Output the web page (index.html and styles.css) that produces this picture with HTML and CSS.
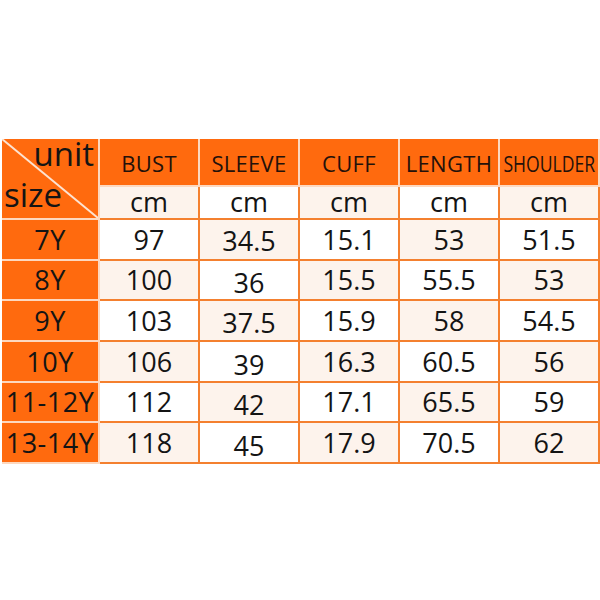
FILE: index.html
```html
<!DOCTYPE html>
<html lang="en">
<head>
<meta charset="utf-8">
<title>Size chart</title>
<link rel="stylesheet" href="styles.css">
</head>
<body>
<div class="page">
  <div class="chart">
    <div class="cell corner">
      <svg class="diag" viewBox="0 0 96 79" preserveAspectRatio="none" aria-hidden="true">
        <line x1="0" y1="0" x2="96" y2="79" stroke="#fde3d1" stroke-width="2"/>
      </svg>
      <span class="unit">unit</span>
      <span class="size">size</span>
    </div>
    <div class="cell head">BUST</div>
    <div class="cell head">SLEEVE</div>
    <div class="cell head">CUFF</div>
    <div class="cell head">LENGTH</div>
    <div class="cell head"><span class="squeeze">SHOULDER</span></div>

    <div class="cell cm p">cm</div>
    <div class="cell cm">cm</div>
    <div class="cell cm p">cm</div>
    <div class="cell cm">cm</div>
    <div class="cell cm p">cm</div>

    <div class="cell label">7Y</div>
    <div class="cell num">97</div>
    <div class="cell num p lo1">34.5</div>
    <div class="cell num">15.1</div>
    <div class="cell num p">53</div>
    <div class="cell num">51.5</div>

    <div class="cell label">8Y</div>
    <div class="cell num p">100</div>
    <div class="cell num lo2">36</div>
    <div class="cell num p">15.5</div>
    <div class="cell num">55.5</div>
    <div class="cell num p">53</div>

    <div class="cell label">9Y</div>
    <div class="cell num">103</div>
    <div class="cell num p lo1">37.5</div>
    <div class="cell num">15.9</div>
    <div class="cell num p">58</div>
    <div class="cell num">54.5</div>

    <div class="cell label">10Y</div>
    <div class="cell num p">106</div>
    <div class="cell num lo2">39</div>
    <div class="cell num p">16.3</div>
    <div class="cell num">60.5</div>
    <div class="cell num p">56</div>

    <div class="cell label">11-12Y</div>
    <div class="cell num">112</div>
    <div class="cell num p lo2">42</div>
    <div class="cell num">17.1</div>
    <div class="cell num p">65.5</div>
    <div class="cell num">59</div>

    <div class="cell label">13-14Y</div>
    <div class="cell num p">118</div>
    <div class="cell num lo2">45</div>
    <div class="cell num p">17.9</div>
    <div class="cell num">70.5</div>
    <div class="cell num p">62</div>
  </div>
</div>
</body>
</html>
```
FILE: styles.css
```css
html, body {
  margin: 0;
  padding: 0;
  background: #ffffff;
}

.page {
  width: 600px;
  height: 600px;
  padding: 139px 0 0 2px;
  box-sizing: border-box;
  font-family: "Open Sans", "Noto Sans", sans-serif;
  color: #141414;
}

.chart {
  display: grid;
  grid-template-columns: 96px repeat(5, 98px);
  grid-template-rows: 46px 31px repeat(6, 38.67px);
  gap: 2px;
  padding: 0 2px 2px 0;
  width: max-content;
  background: #f4802f;
}

.cell {
  display: flex;
  align-items: center;
  justify-content: center;
  background: #ffffff;
  white-space: nowrap;
  box-sizing: border-box;
}

.p {
  background: #fdf3ec;
}

.corner,
.head,
.label {
  background: #ff6a0e;
  box-shadow: 2px 0 0 #fdd8bf, 0 2px 0 #fdd8bf, 2px 2px 0 #fdd8bf;
}

.corner {
  grid-row: span 2;
  position: relative;
  flex-direction: column;
  align-items: stretch;
  justify-content: flex-start;
}

.diag {
  position: absolute;
  left: 0;
  top: 0;
  width: 100%;
  height: 100%;
}

.unit {
  position: relative;
  font-size: 33px;
  line-height: 33px;
  margin-top: -2px;
  padding-right: 4px;
  text-align: right;
}

.size {
  position: relative;
  font-size: 33px;
  line-height: 33px;
  margin-top: 8px;
  padding-left: 2px;
  text-align: left;
}

.head {
  font-size: 22px;
  letter-spacing: 0.3px;
  color: #24110a;
  padding-top: 1px;
}

.squeeze {
  display: inline-block;
  letter-spacing: 0;
  transform: scaleX(0.8);
}

.cm {
  font-size: 27px;
  padding-bottom: 3px;
}

.num,
.label {
  font-size: 27px;
}

.label {
  letter-spacing: 0.5px;
}

.lo1 {
  padding-top: 3px;
}

.lo2 {
  padding-top: 6px;
}
```
